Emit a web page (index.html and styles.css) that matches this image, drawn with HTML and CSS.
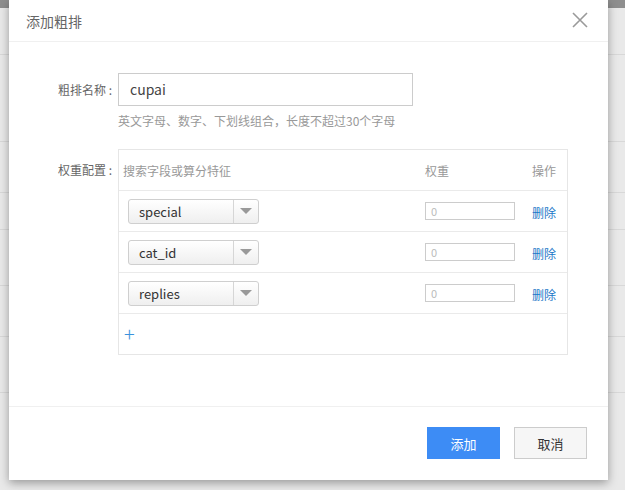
FILE: index.html
```html
<!DOCTYPE html>
<html>
<head>
<meta charset="utf-8">
<link rel="stylesheet" href="styles.css">
</head>
<body>
<div class="page">
  <div class="topbar"></div>
  <div class="bgrow r1"></div>
  <div class="bgrow r2"></div>
  <div class="bgrow r3"></div>
  <div class="bgrow r4"></div>
  <div class="bgrow r5"></div>
  <div class="bgrow r6"></div>
  <div class="bgrow r7"></div>
</div>
<div class="modal">
  <div class="modal-header">
    <span class="title">添加粗排</span>
    <svg class="close" width="16" height="16" viewBox="0 0 16 16"><path d="M1 1 L15 15 M15 1 L1 15" stroke="#9a9a9a" stroke-width="1.6" fill="none"/></svg>
  </div>
  <div class="modal-body">
    <div class="form-row">
      <label class="label">粗排名称 :</label>
      <div class="field">
        <div class="text-input">cupai</div>
        <div class="help">英文字母、数字、下划线组合，长度不超过30个字母</div>
      </div>
    </div>
    <div class="form-row second">
      <label class="label label-top">权重配置 :</label>
      <div class="table">
        <div class="tr thead">
          <div class="c1 th">搜索字段或算分特征</div>
          <div class="c2 th">权重</div>
          <div class="c3 th">操作</div>
        </div>
        <div class="tr">
          <div class="c1"><div class="select"><span class="sel-text">special</span><span class="sel-btn"><i class="caret"></i></span></div></div>
          <div class="c2"><div class="num">0</div></div>
          <div class="c3"><a class="link">删除</a></div>
        </div>
        <div class="tr">
          <div class="c1"><div class="select"><span class="sel-text">cat_id</span><span class="sel-btn"><i class="caret"></i></span></div></div>
          <div class="c2"><div class="num">0</div></div>
          <div class="c3"><a class="link">删除</a></div>
        </div>
        <div class="tr">
          <div class="c1"><div class="select"><span class="sel-text">replies</span><span class="sel-btn"><i class="caret"></i></span></div></div>
          <div class="c2"><div class="num">0</div></div>
          <div class="c3"><a class="link">删除</a></div>
        </div>
        <div class="tr add-row">
          <span class="plus">+</span>
        </div>
      </div>
    </div>
  </div>
  <div class="modal-footer">
    <button class="btn primary">添加</button>
    <button class="btn">取消</button>
  </div>
</div>
</body>
</html>
```
FILE: styles.css
```css
* { box-sizing: border-box; }
html, body { margin: 0; padding: 0; }
body {
  width: 625px;
  height: 490px;
  overflow: hidden;
  background: #e9e9e9;
  font-family: "Noto Sans CJK SC", "Noto Sans", sans-serif;
  position: relative;
}
.page { height: 490px; }
.topbar { height: 8px; background: #8e8e8e; }
.bgrow { height: 1px; background: #d8d8d8; }
.r1 { margin-top: 46px; }
.r2 { margin-top: 86px; }
.r3 { margin-top: 50px; }
.r4 { margin-top: 36px; }
.r5 { margin-top: 55px; }
.r6 { margin-top: 50px; }
.r7 { margin-top: 55px; }

.modal {
  position: absolute;
  left: 9px;
  top: 0;
  width: 599px;
  height: 480px;
  background: #fff;
  box-shadow: 0 3px 9px rgba(0,0,0,0.35);
  display: flex;
  flex-direction: column;
}
.modal-header {
  height: 42px;
  border-bottom: 1px solid #f0f0f0;
  display: flex;
  align-items: center;
  justify-content: space-between;
  padding: 0 20px 0 17px;
}
.title { font-size: 14px; color: #666; }
.close { margin-top: -2px; }

.modal-body {
  flex: 1;
  padding-top: 31px;
}
.form-row { display: flex; }
.form-row.second { margin-top: 19px; }
.label {
  width: 109px;
  padding-right: 6px;
  text-align: right;
  font-size: 12px;
  color: #666;
  line-height: 33px;
  white-space: nowrap;
}
.label-top { line-height: 42px; }
.field { display: flex; flex-direction: column; }
.text-input {
  width: 295px;
  height: 33px;
  border: 1px solid #ccc;
  padding-left: 11px;
  font-size: 14px;
  line-height: 31px;
  color: #444;
}
.help {
  margin-top: 6px;
  font-size: 12px;
  line-height: 18px;
  color: #999;
}

.table {
  width: 450px;
  border: 1px solid #e6e6e6;
}
.tr {
  display: flex;
  align-items: center;
  height: 41px;
  border-bottom: 1px solid #eaeaea;
}
.tr:last-child { border-bottom: none; height: 40px; }
.thead { height: 41px; }
.c1 { width: 306px; padding-left: 9px; }
.c2 { width: 107px; }
.c3 { flex: 1; }
.th { font-size: 12px; color: #999; }
.thead .c1 { padding-left: 4px; }
.select {
  width: 131px;
  height: 25px;
  border: 1px solid #cfcfcf;
  border-radius: 3px;
  background: linear-gradient(#fff, #efefef);
  display: flex;
  align-items: center;
}
.sel-text {
  flex: 1;
  padding-left: 10px;
  font-size: 13px;
  color: #333;
}
.sel-btn {
  width: 25px;
  height: 100%;
  border-left: 1px solid #d6d6d6;
  display: flex;
  align-items: center;
  justify-content: center;
}
.caret {
  width: 0; height: 0;
  border-left: 6px solid transparent;
  border-right: 6px solid transparent;
  border-top: 6px solid #999;
}
.num {
  width: 90px;
  height: 18px;
  border: 1px solid #ccc;
  font-size: 11px;
  line-height: 16px;
  color: #bbb;
  padding-left: 5px;
}
.link { font-size: 12px; color: #1a77c8; }
.add-row { padding-left: 5px; }
.plus { color: #3a92dc; font-size: 20px; font-weight: 300; line-height: 1; margin-top: -1px; }

.modal-footer {
  height: 74px;
  border-top: 1px solid #f0f0f0;
  display: flex;
  justify-content: flex-end;
  align-items: flex-start;
  gap: 14px;
  padding: 20px 21px 0 0;
}
.btn {
  width: 73px;
  height: 32px;
  border: 1px solid #ccc;
  background: #f6f6f6;
  font-family: inherit;
  font-size: 13px;
  color: #333;
  padding: 0;
}
.btn.primary {
  background: #3d8cf5;
  border-color: #3d8cf5;
  color: #fff;
}
```
